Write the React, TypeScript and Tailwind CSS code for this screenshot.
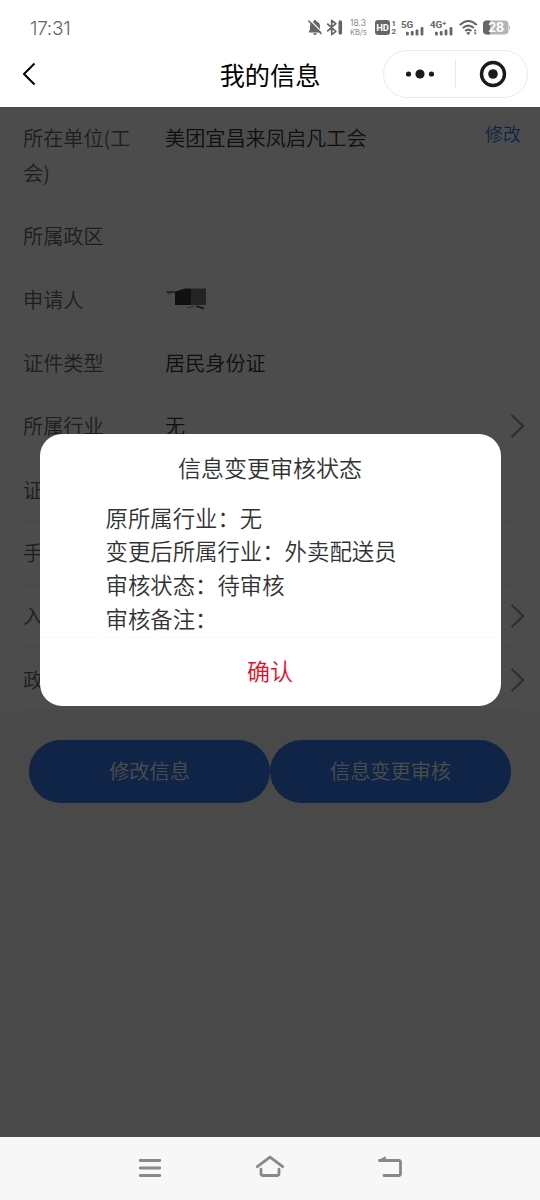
import { ReactNode } from 'react';

interface InfoRow {
  label: string;
  value?: ReactNode;
  arrow?: boolean;
}

const Redacted = () => (
  <svg width="42" height="22" viewBox="0 0 42 22" className="mt-[4px]">
    <path d="M1.5 5 H10" stroke="#333" strokeWidth="1.2" fill="none" />
    <path d="M2.500 7.200 L6 6.500" stroke="#888" strokeWidth="1" fill="none" />
    <path d="M9 5 L20 1.500 H26 V18 H10 V6 Z" fill="#373737" />
    <rect x="26" y="1.500" width="15" height="16.500" fill="#7b7b7b" />
    <path d="M22 21 L29 19" stroke="#888" strokeWidth="1" />
    <path d="M31 19 L39 21.500" stroke="#333" strokeWidth="1.500" />
  </svg>
);

const rows: InfoRow[] = [
  { label: '所属政区' },
  { label: '申请人', value: <Redacted /> },
  { label: '证件类型', value: '居民身份证' },
  { label: '所属行业', value: '无', arrow: true },
  { label: '证件号码' },
  { label: '手机号' },
  { label: '入会时间', arrow: true },
  { label: '政治面貌', arrow: true },
];

const details = ['原所属行业：无', '变更后所属行业：外卖配送员', '审核状态：待审核', '审核备注：'];

function Signal({ label }: { label: string }) {
  return (
    <svg width="23" height="18" viewBox="0 0 23 18" fill="#666">
      <text x="0" y="8.6" fontSize="9.8" fontWeight="700" fontFamily="Roboto, sans-serif">{label}</text>
      <rect x="5" y="12.8" width="2.8" height="3.6" rx="1" />
      <rect x="9.8" y="12" width="2.8" height="4.4" rx="1" />
      <rect x="14.6" y="10.4" width="2.8" height="6" rx="1" />
      <rect x="19.6" y="8" width="2.8" height="8.4" rx="1" />
    </svg>
  );
}

function StatusBar() {
  return (
    <div className="flex h-[43px] items-center pt-[12px] pr-[29px] pl-[30px] font-[Inter,sans-serif] text-[#666]">
      <span className="mt-px text-[19px] leading-none tracking-[-0.3px]">17:31</span>
      <div className="ml-auto flex items-center">
        {/* Muted bell */}
        <svg width="15" height="17" viewBox="0 0 15 17" className="mr-[4px]">
          <path d="M8 1a1.300 1.300 0 0 1 1.300 1.200C11.700 2.800 13 4.700 13 7v3.800l1.200 1.700v1H1.800v-1L3 10.800V7c0-2.300 1.300-4.200 3.700-4.800A1.300 1.300 0 0 1 8 1Z" fill="#666" />
          <path d="M6 14.300h4a2 1.800 0 0 1-4 0Z" fill="#666" />
          <path d="M3 1 15 13" stroke="#fff" strokeWidth="1.100" />
          <path d="M1.800 2 14 14.600" stroke="#666" strokeWidth="1.500" strokeLinecap="round" />
        </svg>
        <svg width="17" height="17" viewBox="0 0 17 17" className="mr-[7px]" fill="none" stroke="#666">
          <path d="M1.200 4.700 9.800 12.300 5.700 15.600V1.400L9.800 4.700 1.200 12.300" strokeWidth="1.700" strokeLinejoin="round" />
          <path d="M14.300 3V14" strokeWidth="3.600" strokeLinecap="round" />
        </svg>
        <div className="mr-[6px] w-[19px] text-[8.600px] leading-[8.500px]">
          <div>18.3</div>
          <div className="text-[7.800px]">KB/s</div>
        </div>
        <div className="mr-[4px] flex w-[22px] items-center font-[Roboto,sans-serif] font-bold">
          <span className="flex h-[14.500px] w-[15.200px] items-center justify-center rounded-[3px] bg-[#666] text-[9.500px] leading-none text-white">HD</span>
          <span className="ml-[1.200px] flex flex-col text-[8px] leading-[8px]">
            <span>1</span>
            <span>2</span>
          </span>
        </div>
        <div className="mr-[6px] flex"><Signal label="5G" /></div>
        <div className="mr-[6px] flex"><Signal label="4G⁺" /></div>
        <svg width="19" height="17" viewBox="0 0 19 17" className="mr-[5px]" fill="none" stroke="#666" strokeWidth="2">
          <path d="M.8 6Q9.300-1.900 17.800 6" />
          <path d="M3.700 9.100Q9.300 4.100 14.900 9.100" />
          <path d="M6.200 12Q9.300 9.200 12.400 12" />
          <path d="M9.300 16.200 7.200 13.800Q9.300 12.400 11.400 13.800Z" fill="#666" stroke="none" />
          <path d="M16.200 10 17.800 12.200H14.600ZM16.200 15.800 17.800 13.400H14.600Z" fill="#666" stroke="none" />
        </svg>
        <svg width="28" height="15" viewBox="0 0 28 15">
          <rect x="0" y=".5" width="25.500" height="14" rx="4" fill="#b5b5b5" />
          <path d="M7 .5H4a4 4 0 0 0-4 4V10.500a4 4 0 0 0 4 4H7Z" fill="#666" />
          <path d="M26 5.200Q28 7.500 26 9.800Z" fill="#b5b5b5" />
          <text x="5.200" y="12" fontSize="12.500" fontWeight="700" fill="#fff" fontFamily="Inter, sans-serif">28</text>
        </svg>
      </div>
    </div>
  );
}

function TitleBar() {
  return (
    <div className="grid h-[63.700px] grid-cols-[1fr_auto_1fr] items-start pr-[12px] pl-[22px]">
      <button aria-label="返回" className="mt-[19px] w-fit">
        <svg width="14" height="24" viewBox="0 0 14 24" fill="none" stroke="#000" strokeWidth="2">
          <path d="M12.500 1.500 2 12 12.500 22.500" strokeLinejoin="round" />
        </svg>
      </button>
      <h1 className="-ml-[10px] pt-[13px] text-[25.200px] leading-[36px] font-normal text-black">我的信息</h1>
      <div className="mt-[7px] flex h-[48px] w-[145px] items-center justify-self-end rounded-full border border-[#ebebeb]">
        <button aria-label="更多" className="flex w-[71px] justify-center">
          <svg width="30" height="10" viewBox="0 0 30 10" fill="#1a1a1a">
            <circle cx="3.500" cy="5" r="2.600" />
            <circle cx="15" cy="5" r="4.600" />
            <circle cx="26.500" cy="5" r="2.600" />
          </svg>
        </button>
        <div className="h-[28px] w-px bg-[#e8e8e8]" />
        <button aria-label="关闭" className="flex flex-1 justify-center pl-[2px]">
          <svg width="28" height="28" viewBox="0 0 28 28">
            <circle cx="14" cy="14" r="11.500" fill="none" stroke="#1a1a1a" strokeWidth="3.400" />
            <circle cx="14" cy="14" r="4.800" fill="#1a1a1a" />
          </svg>
        </button>
      </div>
    </div>
  );
}

function Row({ label, value, arrow }: InfoRow) {
  return (
    <div className="flex h-[63.360px] pr-[15px] pl-[23px]">
      <div className="flex flex-1 items-start border-b border-[#f2f2f2] pt-[14.800px]">
        <span className="w-[142px] text-[#646566]">{label}</span>
        <span className="text-[#323233]">{value}</span>
      </div>
      <div className="-ml-[5px] flex w-[14px] items-center">
        {arrow && (
          <svg width="14" height="24" viewBox="0 0 14 24" fill="none" stroke="#969799" strokeWidth="2.200" strokeLinecap="round">
            <path d="M1.200 1.500 12 12 1.200 22.500" />
          </svg>
        )}
      </div>
    </div>
  );
}

function ReviewDialog() {
  return (
    <div className="absolute inset-0 flex items-start justify-center bg-black/70 pt-[327.400px]">
      <div role="dialog" className="flex h-[271.500px] w-[461px] flex-col overflow-hidden rounded-[22px] bg-white text-[#323233]">
        <h2 className="pt-[16px] text-center text-[23.040px] leading-[34.500px]">信息变更审核状态</h2>
        <div className="flex-1 pt-[16.200px] pl-[66px] text-[22.400px] leading-[33.700px]">
          {details.map((line) => (
            <p key={line}>{line}</p>
          ))}
        </div>
        <button className="h-[68.500px] border-t border-[#fafafa] pb-[4px] text-[23.040px] text-[#ee0a24]">确认</button>
      </div>
    </div>
  );
}

function NavBar() {
  return (
    <nav className="flex h-[63px] items-center justify-center gap-[90px] bg-[#f7f7f7]">
      <svg width="30" height="30" viewBox="0 0 30 30" fill="none" stroke="#888" strokeWidth="2.800" strokeLinecap="round">
        <path d="M5.200 7.500H24.800M5.200 15H24.800M5.200 22.500H24.800" />
      </svg>
      <svg width="30" height="30" viewBox="0 0 30 30" fill="none" stroke="#888" strokeWidth="2.800" strokeLinecap="round" strokeLinejoin="round">
        <path d="M2.300 13.700 15 4.100 27.700 13.700" />
        <path d="M6 16.200V20.500Q6 22.500 8 22.500H22Q24 22.500 24 20.500V16.200" />
      </svg>
      <svg width="30" height="30" viewBox="0 0 30 30" fill="none" stroke="#888" strokeWidth="2.800" strokeLinecap="round" strokeLinejoin="round">
        <path d="M4.500 7.500H23.500Q25.500 7.500 25.500 9.500V20.500Q25.500 22.500 23.500 22.500H9" />
        <path d="M10 4.500 4.500 7.500H9.500Z" fill="#888" strokeWidth="1.800" />
      </svg>
    </nav>
  );
}

export default function App() {
  return (
    <div className="flex h-[1200px] w-[540px] flex-col overflow-hidden bg-white font-['Noto_Sans_CJK_SC',sans-serif] font-[350]">
      <StatusBar />
      <TitleBar />
      <main className="relative h-[1030.300px] bg-[#f5f5f5]">
        <section className="bg-white text-[20.160px] leading-[34.500px]">
          <div className="flex h-[97.700px] pr-[19px] pl-[23px]">
            <div className="flex w-[438px] items-start border-b border-[#f2f2f2] pt-[14.400px]">
              <div className="w-[142px] pr-[30px] text-[#646566]">所在单位(工会)</div>
              <div className="text-[#323233]">美团宜昌来凤启凡工会</div>
            </div>
            <button className="mt-[8.600px] ml-auto h-[36px] text-[18px] leading-[36px] text-[#3478e5]">修改</button>
          </div>
          {rows.map((row) => (
            <Row key={row.label} {...row} />
          ))}
        </section>
        <div className="flex px-[29px] pt-[28.500px] text-[20.160px]">
          <button className="h-[63.500px] flex-1 rounded-full bg-[#327be9] pb-px text-white">修改信息</button>
          <button className="h-[63.500px] flex-1 rounded-full bg-[#327be9] pb-px text-white">信息变更审核</button>
        </div>
        <ReviewDialog />
      </main>
      <NavBar />
    </div>
  );
}
